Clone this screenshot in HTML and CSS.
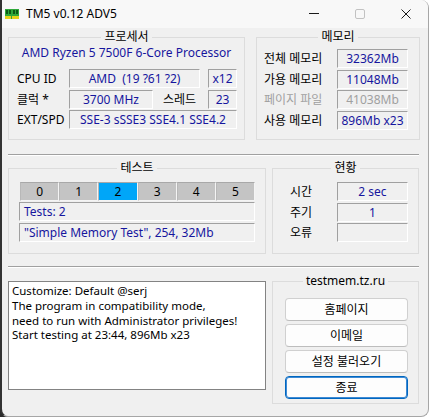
FILE: index.html
```html
<!DOCTYPE html>
<html lang="ko">
<head>
<meta charset="utf-8">
<title>TM5 v0.12 ADV5</title>
<link rel="stylesheet" href="styles.css">
</head>
<body>
<div class="window">
  <div class="titlebar">
    <svg class="app-icon" width="14" height="10" viewBox="0 0 14 10">
      <rect x="0" y="0" width="14" height="7" fill="#2fa83a"/>
      <rect x="1" y="1" width="2" height="4" fill="#0c5a16"/>
      <rect x="4" y="1" width="2" height="4" fill="#0c5a16"/>
      <rect x="8" y="1" width="2" height="4" fill="#0c5a16"/>
      <rect x="11" y="1" width="2" height="4" fill="#0c5a16"/>
      <rect x="0" y="7" width="14" height="3" fill="#e6d21a"/>
      <rect x="6" y="7" width="1" height="3" fill="#2fa83a"/>
    </svg>
    <span class="title">TM5 v0.12 ADV5</span>
    <div class="caption">
      <span class="cap cap-min"><svg width="10" height="10" viewBox="0 0 10 10"><path d="M0 4.5h10" stroke="#1a1a1a" stroke-width="1"/></svg></span>
      <span class="cap cap-max"><svg width="10" height="10" viewBox="0 0 10 10"><rect x="0.5" y="0.5" width="9" height="9" rx="1.5" fill="none" stroke="#c2c2c2" stroke-width="1"/></svg></span>
      <span class="cap cap-close"><svg width="10" height="10" viewBox="0 0 10 10"><path d="M0.5 0.5L9.5 9.5M9.5 0.5L0.5 9.5" stroke="#1a1a1a" stroke-width="1"/></svg></span>
    </div>
  </div>

  <div class="client">
    <div class="row row-top">
      <section class="group group-proc">
        <div class="legend">프로세서</div>
        <div class="cpu-name">AMD Ryzen 5 7500F 6-Core Processor</div>
        <div class="rows rows-proc">
          <div class="frow">
            <span class="lbl lbl-proc">CPU ID</span>
            <span class="field f-cpuid">AMD  (19 ?61 ?2)</span>
            <span class="field f-small f-push">x12</span>
          </div>
          <div class="frow">
            <span class="lbl lbl-proc">클럭 *</span>
            <span class="field f-clock">3700 MHz</span>
            <span class="lbl lbl-thread">스레드</span>
            <span class="field f-small">23</span>
          </div>
          <div class="frow">
            <span class="lbl lbl-proc">EXT/SPD</span>
            <span class="field f-ext">SSE-3 sSSE3 SSE4.1 SSE4.2</span>
          </div>
        </div>
      </section>

      <section class="group group-mem">
        <div class="legend">메모리</div>
        <div class="rows rows-mem">
          <div class="frow">
            <span class="lbl lbl-mem">전체 메모리</span>
            <span class="field f-mem">32362Mb</span>
          </div>
          <div class="frow">
            <span class="lbl lbl-mem">가용 메모리</span>
            <span class="field f-mem">11048Mb</span>
          </div>
          <div class="frow">
            <span class="lbl lbl-mem disabled">페이지 파일</span>
            <span class="field f-mem disabled">41038Mb</span>
          </div>
          <div class="frow">
            <span class="lbl lbl-mem">사용 메모리</span>
            <span class="field f-mem">896Mb x23</span>
          </div>
        </div>
      </section>
    </div>

    <div class="sep"></div>

    <div class="row row-mid">
      <section class="group group-test">
        <div class="legend">테스트</div>
        <div class="tabs">
          <span class="tab">0</span>
          <span class="tab">1</span>
          <span class="tab active">2</span>
          <span class="tab">3</span>
          <span class="tab">4</span>
          <span class="tab">5</span>
        </div>
        <div class="field f-wide f-tests">Tests: 2</div>
        <div class="field f-wide f-desc">"Simple Memory Test", 254, 32Mb</div>
      </section>

      <section class="group group-status">
        <div class="legend">현황</div>
        <div class="rows rows-status">
          <div class="frow">
            <span class="lbl lbl-status">시간</span>
            <span class="field f-mem">2 sec</span>
          </div>
          <div class="frow">
            <span class="lbl lbl-status">주기</span>
            <span class="field f-mem">1</span>
          </div>
          <div class="frow">
            <span class="lbl lbl-status">오류</span>
            <span class="field f-mem"></span>
          </div>
        </div>
      </section>
    </div>

    <div class="sep sep-2"></div>

    <div class="row row-bottom">
      <div class="log">
        <div class="log-line">Customize: Default @serj</div>
        <div class="log-line">The program in compatibility mode,</div>
        <div class="log-line">need to run with Administrator privileges!</div>
        <div class="log-line">Start testing at 23:44, 896Mb x23</div>
      </div>

      <section class="group group-buttons">
        <div class="legend">testmem.tz.ru</div>
        <div class="buttons">
          <button class="btn" type="button">홈페이지</button>
          <button class="btn" type="button">이메일</button>
          <button class="btn" type="button">설정 불러오기</button>
          <button class="btn btn-default" type="button">종료</button>
        </div>
      </section>
    </div>
  </div>
</div>
</body>
</html>
```

FILE: styles.css
```css
html, body {
  margin: 0;
  padding: 0;
}

body {
  background: linear-gradient(90deg, #2b2b2b 0, #2b2b2b 40px, #ffffff 40px);
  font-family: "Noto Sans", "Noto Sans CJK KR", sans-serif;
  font-size: 12px;
  color: #000;
}

.window {
  box-sizing: border-box;
  width: 429px;
  height: 417px;
  background: #f0f0f0;
  border-left: 2px solid #333333;
  border-right: 1px solid #a6a6a6;
  border-bottom: 1px solid #a6a6a6;
  border-radius: 0 8px 8px 8px;
  overflow: hidden;
  display: flex;
  flex-direction: column;
}

/* ---------- title bar ---------- */
.titlebar {
  height: 28px;
  flex: none;
  display: flex;
  align-items: center;
  background: #f8f8f8;
}

.app-icon {
  margin-left: 3px;
  flex: none;
}

.title {
  margin-left: 7px;
  line-height: 28px;
  font-size: 12px;
}

.caption {
  margin-left: auto;
  display: flex;
  height: 28px;
}

.cap {
  width: 46px;
  height: 28px;
  display: flex;
  align-items: center;
  justify-content: center;
}

.cap svg {
  display: block;
}

.cap-close {
  width: 45px;
}

/* ---------- client area ---------- */
.client {
  padding-left: 6px;
  display: flex;
  flex-direction: column;
}

.row {
  display: flex;
  align-items: flex-start;
}

.row-top {
  margin-top: 9px;
  gap: 11px;
}

.row-mid {
  margin-top: 12px;
  gap: 6px;
}

.row-bottom {
  margin-top: 13px;
  gap: 6px;
}

.sep {
  width: 411px;
  height: 0;
  margin-top: 14px;
  border-top: 1px solid #a0a0a0;
  border-bottom: 1px solid #ffffff;
}

.sep-2 {
  margin-top: 12px;
}

/* ---------- group boxes ---------- */
.group {
  box-sizing: border-box;
  border: 1px solid #dcdcdc;
  display: flex;
  flex-direction: column;
}

.legend {
  align-self: center;
  margin-top: -8px;
  height: 14px;
  line-height: 14px;
  padding: 0 3px;
  background: #f0f0f0;
  white-space: nowrap;
}

.group-proc {
  width: 237px;
  height: 103px;
}

.group-mem {
  width: 164px;
  height: 103px;
}

.group-test {
  width: 258px;
  height: 86px;
}

.group-status {
  width: 147px;
  height: 86px;
}

.group-buttons {
  width: 147px;
  height: 123px;
}

.cpu-name {
  height: 18px;
  line-height: 18px;
  text-align: center;
  color: #16169e;
  white-space: nowrap;
}

.rows {
  display: flex;
  flex-direction: column;
  gap: 1.5px;
}

.rows-proc {
  margin-top: 7px;
  padding-left: 8px;
}

.rows-mem {
  margin-top: 5px;
  padding-left: 7px;
}

.rows-status {
  margin-top: 7px;
  padding-left: 17px;
}

.frow {
  display: flex;
  align-items: center;
  height: 19px;
}

.lbl {
  line-height: 19px;
  white-space: nowrap;
  flex: none;
}

.lbl-proc {
  width: 52px;
}

.lbl-thread {
  width: 45px;
  margin-left: 10px;
}

.lbl-mem {
  width: 73px;
}

.lbl-status {
  width: 47px;
}

.disabled {
  color: #a0a0a0 !important;
}

/* sunken static fields */
.field {
  box-sizing: border-box;
  height: 19px;
  border: 1px solid;
  border-color: #a0a0a0 #ffffff #ffffff #a0a0a0;
  background: #f0f0f0;
  color: #16169e;
  text-align: center;
  line-height: 17px;
  white-space: pre;
  overflow: visible;
  flex: none;
  display: block;
}

.f-cpuid {
  width: 131px;
}

.f-small {
  width: 29px;
}

.f-push {
  margin-left: 8px;
}

.f-clock {
  width: 84px;
}

.f-ext {
  width: 168px;
}

.f-mem {
  width: 71px;
}

.f-wide {
  width: 236px;
  margin-left: 10px;
  text-align: left;
  padding-left: 4px;
}

.f-tests {
  margin-top: 1px;
}

.f-desc {
  margin-top: 2px;
}

/* ---------- test tabs ---------- */
.tabs {
  display: flex;
  width: 235px;
  height: 19px;
  margin-top: 7px;
  margin-left: 11px;
}

.tab {
  flex: 1;
  box-sizing: border-box;
  height: 19px;
  line-height: 17px;
  text-align: center;
  background: #c4c4c4;
  border: 1px solid;
  border-color: #a8a8a8 #f4f4f4 #f4f4f4 #b8b8b8;
}

.tab.active {
  background: #00a6f8;
}

/* ---------- log ---------- */
.log {
  box-sizing: border-box;
  width: 258px;
  height: 109px;
  border: 1px solid #838383;
  background: #ffffff;
  padding: 2px 3px;
  font-size: 11.5px;
  white-space: nowrap;
  overflow: hidden;
}

.log-line {
  height: 14.8px;
  line-height: 14.8px;
}

/* ---------- buttons ---------- */
.buttons {
  display: flex;
  flex-direction: column;
  gap: 3px;
  margin-top: 10px;
  padding-left: 12px;
}

.btn {
  box-sizing: border-box;
  width: 123px;
  height: 23px;
  margin: 0;
  padding: 0;
  font: inherit;
  font-size: 12px;
  line-height: 21px;
  color: #000;
  background: #fdfdfd;
  border: 1px solid #d0d0d0;
  border-bottom-color: #bdbdbd;
  border-radius: 4px;
  text-align: center;
}

.btn-default {
  border: 1px solid #0067c0;
  box-shadow: inset 0 0 0 1px #3f8ad4;
}
```
